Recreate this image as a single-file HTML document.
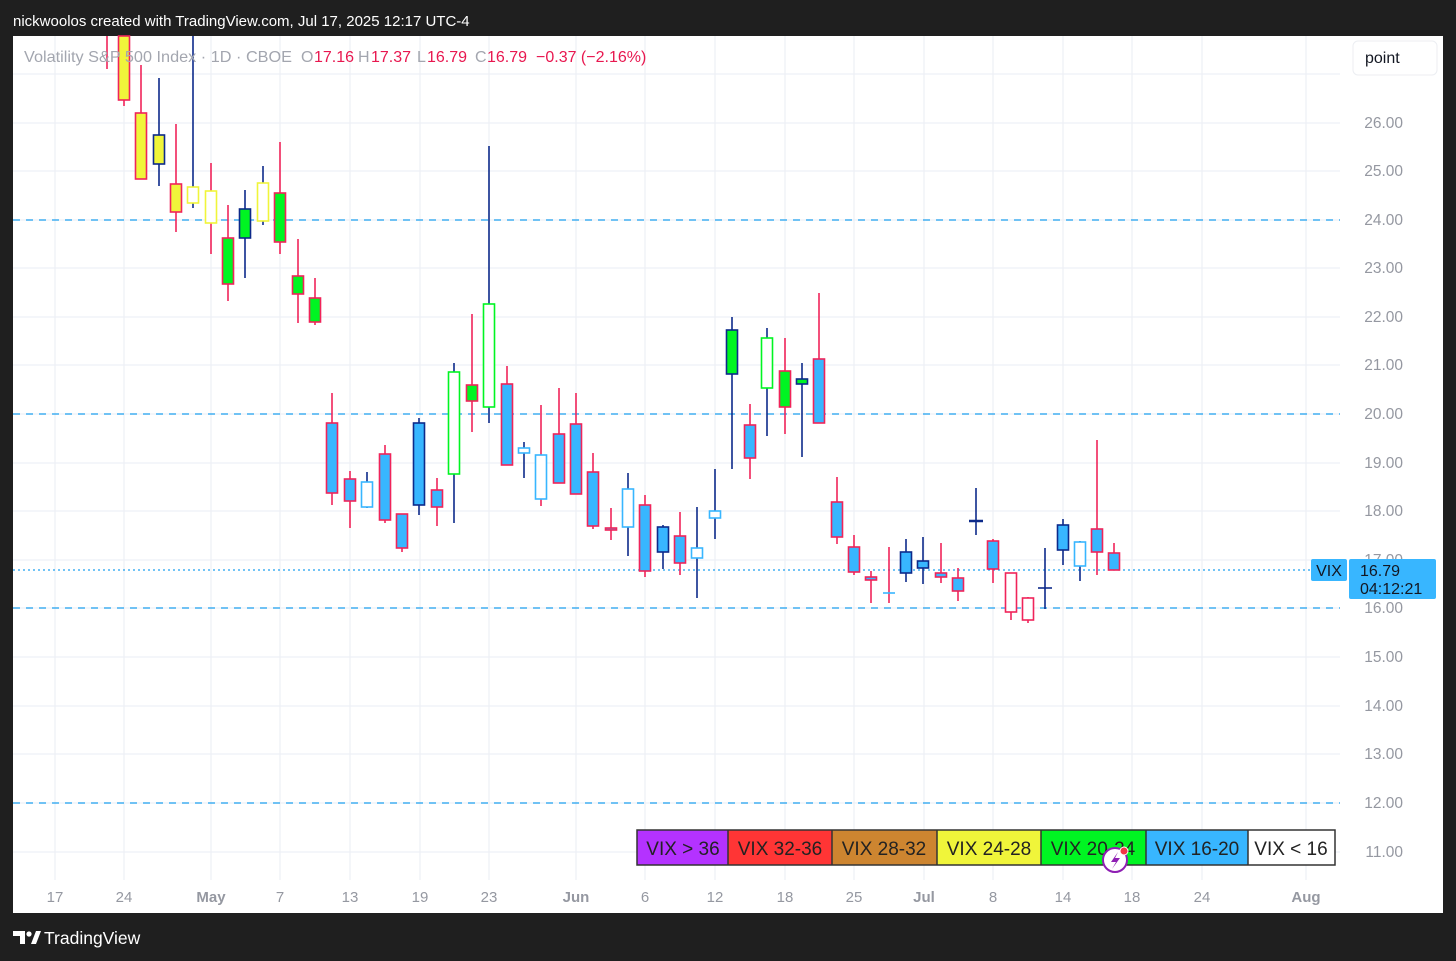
<!DOCTYPE html>
<html><head><meta charset="utf-8"><style>
body{margin:0;width:1456px;height:961px;background:#1f1f1f;overflow:hidden;font-family:"Liberation Sans",sans-serif}
</style></head><body>
<svg width="1456" height="961" xmlns="http://www.w3.org/2000/svg" style="position:absolute;left:0;top:0">
<rect x="0" y="0" width="1456" height="961" fill="#1f1f1f"/>
<rect x="13" y="36" width="1430" height="877" fill="#ffffff"/>
<text x="13" y="26" fill="#fff" font-size="15">nickwoolos created with TradingView.com, Jul 17, 2025 12:17 UTC-4</text>
<g stroke="#eef0f6" stroke-width="1.3">
<line x1="13" y1="74" x2="1340" y2="74"/><line x1="13" y1="123" x2="1340" y2="123"/><line x1="13" y1="171" x2="1340" y2="171"/><line x1="13" y1="220" x2="1340" y2="220"/><line x1="13" y1="268" x2="1340" y2="268"/><line x1="13" y1="317" x2="1340" y2="317"/><line x1="13" y1="365" x2="1340" y2="365"/><line x1="13" y1="414" x2="1340" y2="414"/><line x1="13" y1="463" x2="1340" y2="463"/><line x1="13" y1="511" x2="1340" y2="511"/><line x1="13" y1="560" x2="1340" y2="560"/><line x1="13" y1="608" x2="1340" y2="608"/><line x1="13" y1="657" x2="1340" y2="657"/><line x1="13" y1="706" x2="1340" y2="706"/><line x1="13" y1="754" x2="1340" y2="754"/><line x1="13" y1="803" x2="1340" y2="803"/><line x1="13" y1="852" x2="1340" y2="852"/>
<line x1="55" y1="36" x2="55" y2="880"/><line x1="124" y1="36" x2="124" y2="880"/><line x1="211" y1="36" x2="211" y2="880"/><line x1="280" y1="36" x2="280" y2="880"/><line x1="350" y1="36" x2="350" y2="880"/><line x1="420" y1="36" x2="420" y2="880"/><line x1="489" y1="36" x2="489" y2="880"/><line x1="576" y1="36" x2="576" y2="880"/><line x1="645" y1="36" x2="645" y2="880"/><line x1="715" y1="36" x2="715" y2="880"/><line x1="785" y1="36" x2="785" y2="880"/><line x1="854" y1="36" x2="854" y2="880"/><line x1="924" y1="36" x2="924" y2="880"/><line x1="993" y1="36" x2="993" y2="880"/><line x1="1063" y1="36" x2="1063" y2="880"/><line x1="1132" y1="36" x2="1132" y2="880"/><line x1="1202" y1="36" x2="1202" y2="880"/><line x1="1306" y1="36" x2="1306" y2="880"/>
</g>
<g stroke="#1ea0f0" stroke-width="1.3" stroke-dasharray="7,6">
<line x1="13" y1="220" x2="1340" y2="220"/><line x1="13" y1="414" x2="1340" y2="414"/><line x1="13" y1="608" x2="1340" y2="608"/><line x1="13" y1="803" x2="1340" y2="803"/>
</g>
<line x1="13" y1="570" x2="1310" y2="570" stroke="#1ea0f0" stroke-width="1.3" stroke-dasharray="2,3"/>
<g font-size="15.5" fill="#9598a1" text-anchor="end">
<text x="1403" y="128">26.00</text><text x="1403" y="176">25.00</text><text x="1403" y="225">24.00</text><text x="1403" y="273">23.00</text><text x="1403" y="322">22.00</text><text x="1403" y="370">21.00</text><text x="1403" y="419">20.00</text><text x="1403" y="468">19.00</text><text x="1403" y="516">18.00</text><text x="1403" y="565">17.00</text><text x="1403" y="613">16.00</text><text x="1403" y="662">15.00</text><text x="1403" y="711">14.00</text><text x="1403" y="759">13.00</text><text x="1403" y="808">12.00</text><text x="1403" y="857">11.00</text>
</g>
<g font-size="15" fill="#9598a1" text-anchor="middle">
<text x="55" y="902">17</text><text x="124" y="902">24</text><text x="211" y="902" font-weight="bold">May</text><text x="280" y="902">7</text><text x="350" y="902">13</text><text x="420" y="902">19</text><text x="489" y="902">23</text><text x="576" y="902" font-weight="bold">Jun</text><text x="645" y="902">6</text><text x="715" y="902">12</text><text x="785" y="902">18</text><text x="854" y="902">25</text><text x="924" y="902" font-weight="bold">Jul</text><text x="993" y="902">8</text><text x="1063" y="902">14</text><text x="1132" y="902">18</text><text x="1202" y="902">24</text><text x="1306" y="902" font-weight="bold">Aug</text>
</g>
<!-- candles -->
<g stroke-width="1.6">
<line x1="107" y1="36" x2="107" y2="69" stroke="#f0245a"/>
<line x1="124" y1="36" x2="124" y2="106" stroke="#f0245a"/><rect x="118.5" y="36" width="11" height="64" fill="#f0f53a" stroke="#f0245a"/>
<line x1="141" y1="65" x2="141" y2="179" stroke="#f0245a"/><rect x="135.5" y="113" width="11" height="66" fill="#f0f53a" stroke="#f0245a"/>
<line x1="159" y1="78" x2="159" y2="186" stroke="#0d2a8a"/><rect x="153.5" y="135" width="11" height="29" fill="#f0f53a" stroke="#0d2a8a"/>
<line x1="176" y1="124" x2="176" y2="232" stroke="#f0245a"/><rect x="170.5" y="184" width="11" height="28" fill="#f0f53a" stroke="#f0245a"/>
<line x1="193" y1="36" x2="193" y2="208" stroke="#0d2a8a"/><rect x="187.5" y="187" width="11" height="16" fill="#fff" stroke="#f0f53a"/>
<line x1="211" y1="163" x2="211" y2="254" stroke="#f0245a"/><rect x="205.5" y="191" width="11" height="32" fill="#fff" stroke="#f0f53a"/>
<line x1="228" y1="205" x2="228" y2="301" stroke="#f0245a"/><rect x="222.5" y="238" width="11" height="46" fill="#00f522" stroke="#f0245a"/>
<line x1="245" y1="190" x2="245" y2="278" stroke="#0d2a8a"/><rect x="239.5" y="209" width="11" height="29" fill="#00f522" stroke="#0d2a8a"/>
<line x1="263" y1="166" x2="263" y2="225" stroke="#0d2a8a"/><rect x="257.5" y="183" width="11" height="38" fill="#fff" stroke="#f0f53a"/>
<line x1="280" y1="142" x2="280" y2="254" stroke="#f0245a"/><rect x="274.5" y="193" width="11" height="49" fill="#00f522" stroke="#f0245a"/>
<line x1="298" y1="239" x2="298" y2="323" stroke="#f0245a"/><rect x="292.5" y="276" width="11" height="18" fill="#00f522" stroke="#f0245a"/>
<line x1="315" y1="278" x2="315" y2="325" stroke="#f0245a"/><rect x="309.5" y="298" width="11" height="24" fill="#00f522" stroke="#f0245a"/>
<line x1="332" y1="393" x2="332" y2="505" stroke="#f0245a"/><rect x="326.5" y="423" width="11" height="70" fill="#38b6ff" stroke="#f0245a"/>
<line x1="350" y1="471" x2="350" y2="528" stroke="#f0245a"/><rect x="344.5" y="479" width="11" height="22" fill="#38b6ff" stroke="#f0245a"/>
<line x1="367" y1="472" x2="367" y2="508" stroke="#0d2a8a"/><rect x="361.5" y="482" width="11" height="25" fill="#fff" stroke="#38b6ff"/>
<line x1="385" y1="445" x2="385" y2="523" stroke="#f0245a"/><rect x="379.5" y="454" width="11" height="66" fill="#38b6ff" stroke="#f0245a"/>
<line x1="402" y1="514" x2="402" y2="552" stroke="#f0245a"/><rect x="396.5" y="514" width="11" height="34" fill="#38b6ff" stroke="#f0245a"/>
<line x1="419" y1="418" x2="419" y2="515" stroke="#0d2a8a"/><rect x="413.5" y="423" width="11" height="82" fill="#38b6ff" stroke="#0d2a8a"/>
<line x1="437" y1="478" x2="437" y2="526" stroke="#f0245a"/><rect x="431.5" y="490" width="11" height="17" fill="#38b6ff" stroke="#f0245a"/>
<line x1="454" y1="363" x2="454" y2="523" stroke="#0d2a8a"/><rect x="448.5" y="372" width="11" height="102" fill="#fff" stroke="#00f522"/>
<line x1="472" y1="314" x2="472" y2="432" stroke="#f0245a"/><rect x="466.5" y="385" width="11" height="16" fill="#00f522" stroke="#f0245a"/>
<line x1="489" y1="146" x2="489" y2="423" stroke="#0d2a8a"/><rect x="483.5" y="304" width="11" height="103" fill="#fff" stroke="#00f522"/>
<line x1="507" y1="366" x2="507" y2="465" stroke="#f0245a"/><rect x="501.5" y="384" width="11" height="81" fill="#38b6ff" stroke="#f0245a"/>
<line x1="524" y1="442" x2="524" y2="478" stroke="#0d2a8a"/><rect x="518.5" y="448" width="11" height="5" fill="#fff" stroke="#38b6ff"/>
<line x1="541" y1="405" x2="541" y2="506" stroke="#f0245a"/><rect x="535.5" y="455" width="11" height="44" fill="#fff" stroke="#38b6ff"/>
<line x1="559" y1="388" x2="559" y2="483" stroke="#f0245a"/><rect x="553.5" y="434" width="11" height="49" fill="#38b6ff" stroke="#f0245a"/>
<line x1="576" y1="393" x2="576" y2="494" stroke="#f0245a"/><rect x="570.5" y="424" width="11" height="70" fill="#38b6ff" stroke="#f0245a"/>
<line x1="593" y1="453" x2="593" y2="529" stroke="#f0245a"/><rect x="587.5" y="472" width="11" height="54" fill="#38b6ff" stroke="#f0245a"/>
<line x1="611" y1="508" x2="611" y2="540" stroke="#f0245a"/><rect x="605.5" y="528" width="11" height="2" fill="#38b6ff" stroke="#f0245a"/>
<line x1="628" y1="473" x2="628" y2="556" stroke="#0d2a8a"/><rect x="622.5" y="489" width="11" height="38" fill="#fff" stroke="#38b6ff"/>
<line x1="645" y1="495" x2="645" y2="577" stroke="#f0245a"/><rect x="639.5" y="505" width="11" height="66" fill="#38b6ff" stroke="#f0245a"/>
<line x1="663" y1="525" x2="663" y2="569" stroke="#0d2a8a"/><rect x="657.5" y="527" width="11" height="25" fill="#38b6ff" stroke="#0d2a8a"/>
<line x1="680" y1="512" x2="680" y2="575" stroke="#f0245a"/><rect x="674.5" y="536" width="11" height="27" fill="#38b6ff" stroke="#f0245a"/>
<line x1="697" y1="507" x2="697" y2="598" stroke="#0d2a8a"/><rect x="691.5" y="548" width="11" height="10" fill="#fff" stroke="#38b6ff"/>
<line x1="715" y1="469" x2="715" y2="539" stroke="#0d2a8a"/><rect x="709.5" y="511" width="11" height="7" fill="#fff" stroke="#38b6ff"/>
<line x1="732" y1="317" x2="732" y2="469" stroke="#0d2a8a"/><rect x="726.5" y="330" width="11" height="44" fill="#00f522" stroke="#0d2a8a"/>
<line x1="750" y1="404" x2="750" y2="479" stroke="#f0245a"/><rect x="744.5" y="425" width="11" height="33" fill="#38b6ff" stroke="#f0245a"/>
<line x1="767" y1="328" x2="767" y2="436" stroke="#0d2a8a"/><rect x="761.5" y="338" width="11" height="50" fill="#fff" stroke="#00f522"/>
<line x1="785" y1="338" x2="785" y2="434" stroke="#f0245a"/><rect x="779.5" y="371" width="11" height="36" fill="#00f522" stroke="#f0245a"/>
<line x1="802" y1="363" x2="802" y2="457" stroke="#0d2a8a"/><rect x="796.5" y="379" width="11" height="5" fill="#00f522" stroke="#0d2a8a"/>
<line x1="819" y1="293" x2="819" y2="423" stroke="#f0245a"/><rect x="813.5" y="359" width="11" height="64" fill="#38b6ff" stroke="#f0245a"/>
<line x1="837" y1="477" x2="837" y2="544" stroke="#f0245a"/><rect x="831.5" y="502" width="11" height="35" fill="#38b6ff" stroke="#f0245a"/>
<line x1="854" y1="535" x2="854" y2="575" stroke="#f0245a"/><rect x="848.5" y="547" width="11" height="25" fill="#38b6ff" stroke="#f0245a"/>
<line x1="871" y1="571" x2="871" y2="603" stroke="#f0245a"/><rect x="865.5" y="577" width="11" height="3" fill="#38b6ff" stroke="#f0245a"/>
<line x1="889" y1="547" x2="889" y2="603" stroke="#f0245a"/><line x1="883" y1="593" x2="895" y2="593" stroke="#38b6ff"/>
<line x1="906" y1="539" x2="906" y2="582" stroke="#0d2a8a"/><rect x="900.5" y="552" width="11" height="21" fill="#38b6ff" stroke="#0d2a8a"/>
<line x1="923" y1="537" x2="923" y2="584" stroke="#0d2a8a"/><rect x="917.5" y="561" width="11" height="7" fill="#38b6ff" stroke="#0d2a8a"/>
<line x1="941" y1="543" x2="941" y2="583" stroke="#f0245a"/><rect x="935.5" y="573" width="11" height="4" fill="#38b6ff" stroke="#f0245a"/>
<line x1="958" y1="568" x2="958" y2="601" stroke="#f0245a"/><rect x="952.5" y="578" width="11" height="13" fill="#38b6ff" stroke="#f0245a"/>
<line x1="976" y1="488" x2="976" y2="535" stroke="#0d2a8a"/><line x1="969" y1="521" x2="983" y2="521" stroke="#0d2a8a" stroke-width="2.5"/>
<line x1="993" y1="539" x2="993" y2="583" stroke="#f0245a"/><rect x="987.5" y="541" width="11" height="28" fill="#38b6ff" stroke="#f0245a"/>
<line x1="1011" y1="573" x2="1011" y2="620" stroke="#f0245a"/><rect x="1005.5" y="573" width="11" height="39" fill="#fff" stroke="#f0245a"/>
<line x1="1028" y1="597" x2="1028" y2="623" stroke="#f0245a"/><rect x="1022.5" y="598" width="11" height="22" fill="#fff" stroke="#f0245a"/>
<line x1="1045" y1="548" x2="1045" y2="609" stroke="#0d2a8a"/><line x1="1038" y1="588" x2="1052" y2="588" stroke="#0d2a8a"/>
<line x1="1063" y1="519" x2="1063" y2="565" stroke="#0d2a8a"/><rect x="1057.5" y="525" width="11" height="25" fill="#38b6ff" stroke="#0d2a8a"/>
<line x1="1080" y1="541" x2="1080" y2="581" stroke="#0d2a8a"/><rect x="1074.5" y="542" width="11" height="24" fill="#fff" stroke="#38b6ff"/>
<line x1="1097" y1="440" x2="1097" y2="575" stroke="#f0245a"/><rect x="1091.5" y="529" width="11" height="23" fill="#38b6ff" stroke="#f0245a"/>
<line x1="1114" y1="543" x2="1114" y2="570" stroke="#f0245a"/><rect x="1108.5" y="553" width="11" height="17" fill="#38b6ff" stroke="#f0245a"/>
</g>
<!-- header -->
<g font-size="16" fill="#a3a6af">
<text x="24" y="62" textLength="268" lengthAdjust="spacingAndGlyphs">Volatility S&amp;P 500 Index · 1D · CBOE</text>
<text x="301" y="62">O</text><text x="314" y="62" fill="#e8174f">17.16</text>
<text x="358" y="62">H</text><text x="371" y="62" fill="#e8174f">17.37</text>
<text x="417" y="62">L</text><text x="427" y="62" fill="#e8174f">16.79</text>
<text x="475" y="62">C</text><text x="487" y="62" fill="#e8174f">16.79</text>
<text x="536" y="62" fill="#e8174f">−0.37 (−2.16%)</text>
</g>
<rect x="1353" y="41" width="84" height="34" rx="5" fill="#fff" stroke="#eceef2"/>
<text x="1365" y="63" font-size="16" fill="#131722">point</text>
<!-- price tags -->
<rect x="1311" y="559" width="36" height="22" rx="2" fill="#38b6ff"/>
<text x="1329" y="576" font-size="16" fill="#131722" text-anchor="middle">VIX</text>
<rect x="1349" y="559" width="87" height="40" rx="2" fill="#38b6ff"/>
<text x="1360" y="576" font-size="16" fill="#131722">16.79</text>
<text x="1360" y="594" font-size="16" fill="#131722">04:12:21</text>
<!-- legend -->
<rect x="637" y="830" width="91" height="35" fill="#b432ff"/>
<rect x="728" y="830" width="104" height="35" fill="#ff3535"/>
<rect x="832" y="830" width="105" height="35" fill="#cd8530"/>
<rect x="937" y="830" width="104" height="35" fill="#f0f53a"/>
<rect x="1041" y="830" width="105" height="35" fill="#00f522"/>
<rect x="1146" y="830" width="102" height="35" fill="#38b6ff"/>
<rect x="1248" y="830" width="87" height="35" fill="#fff"/>
<g stroke="#333" stroke-width="1.5" fill="none"><rect x="637" y="830" width="698" height="35"/><line x1="728" y1="830" x2="728" y2="865"/><line x1="832" y1="830" x2="832" y2="865"/><line x1="937" y1="830" x2="937" y2="865"/><line x1="1041" y1="830" x2="1041" y2="865"/><line x1="1146" y1="830" x2="1146" y2="865"/><line x1="1248" y1="830" x2="1248" y2="865"/></g>
<g font-size="19" fill="#222" text-anchor="middle">
<text x="683" y="855">VIX &gt; 36</text><text x="780" y="855">VIX 32-36</text><text x="884" y="855">VIX 28-32</text><text x="989" y="855">VIX 24-28</text><text x="1093" y="855">VIX 20-24</text><text x="1197" y="855">VIX 16-20</text><text x="1291" y="855">VIX &lt; 16</text>
</g>
<circle cx="1115" cy="860" r="12" fill="#fff" stroke="#8e1fb3" stroke-width="2"/>
<path d="M1118 852 L1111 862 L1116 862 L1112 869 L1120 858 L1115 858 Z" fill="#8e1fb3"/>
<circle cx="1124" cy="851" r="4" fill="#f23645" stroke="#fff" stroke-width="1"/>
<!-- footer -->
<g fill="#fff"><path d="M13 931 H25 V944 H20 V936 H13 Z"/><circle cx="29" cy="934" r="2.6"/><path d="M31 944 L36 931 H41 L36 944 Z"/></g>
<text x="44" y="944" font-size="17.5" fill="#fff">TradingView</text>
</svg>
</body></html>
